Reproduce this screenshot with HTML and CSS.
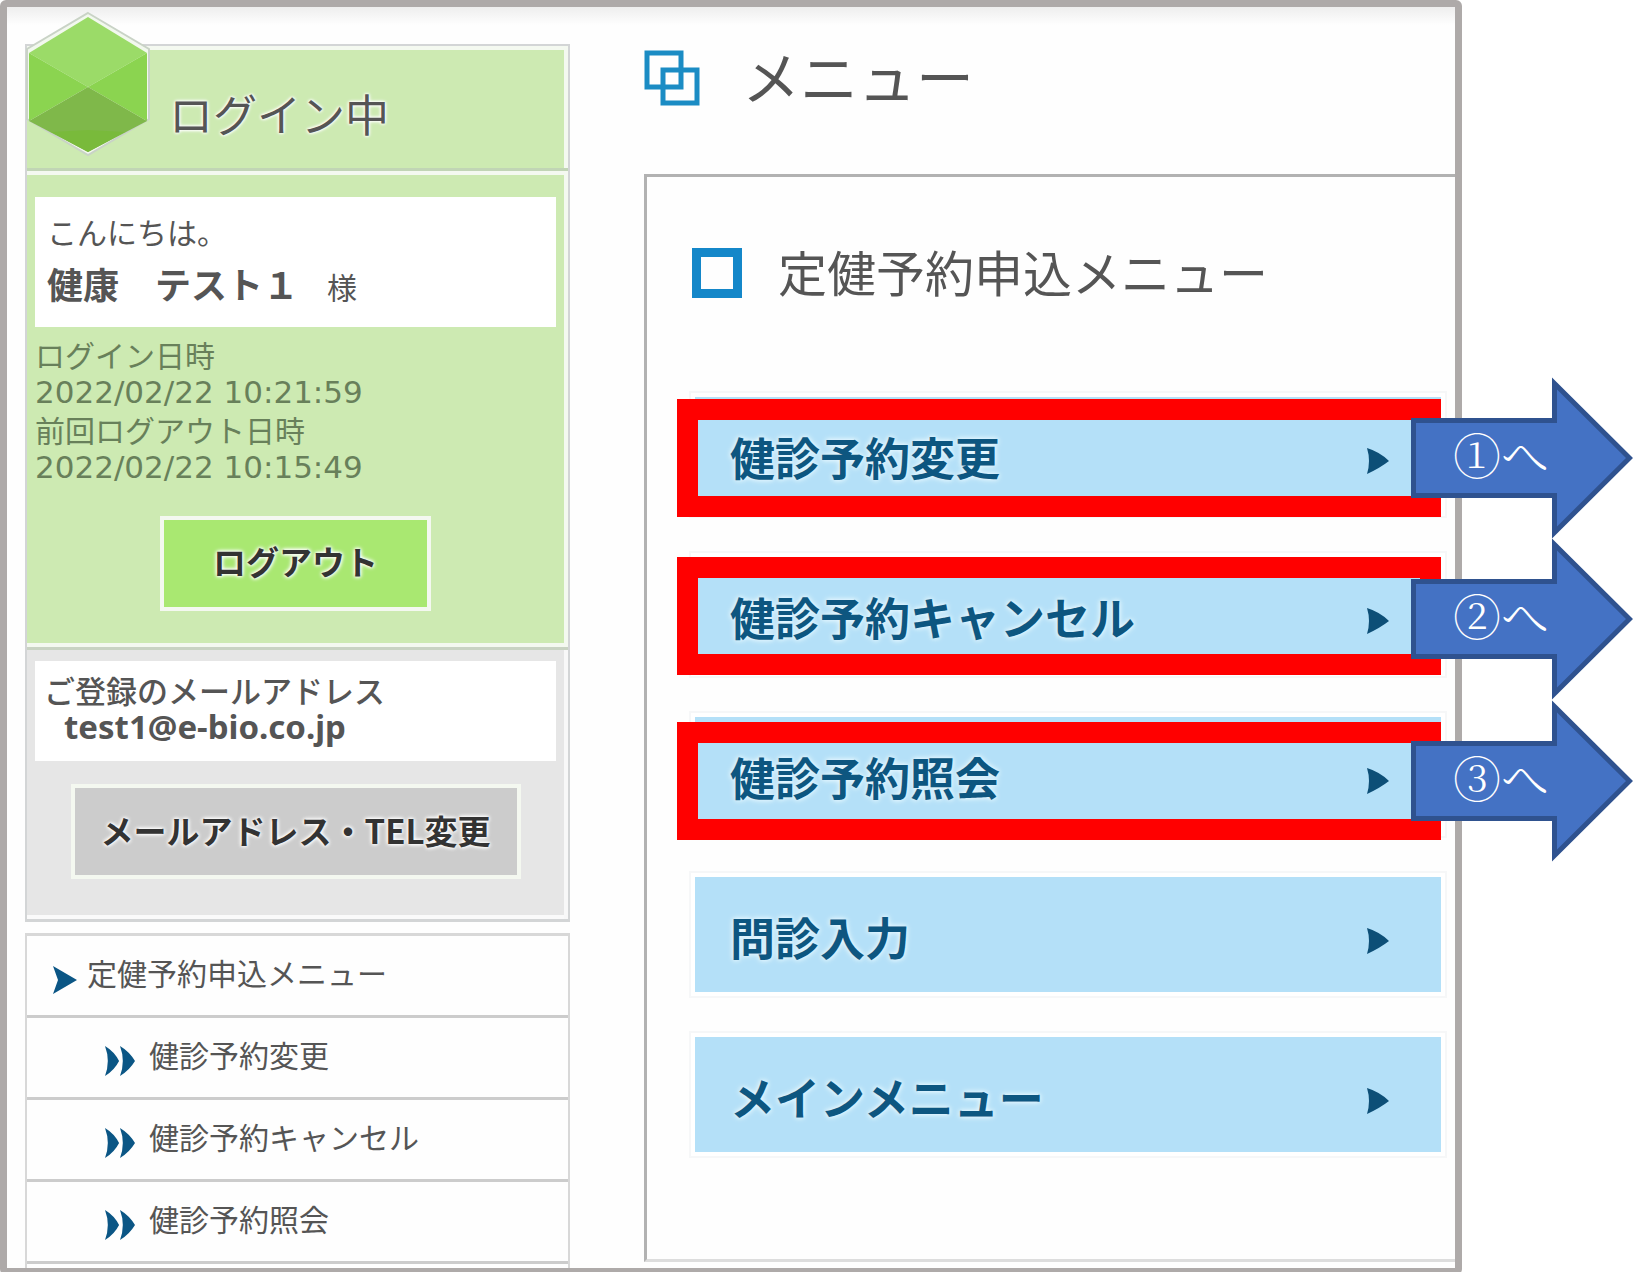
FILE: index.html
```html
<!DOCTYPE html>
<html lang="ja">
<head>
<meta charset="utf-8">
<meta name="viewport" content="width=device-width, initial-scale=1">
<title>メニュー</title>
<link rel="stylesheet" href="styles.css">
</head>
<body>
<svg width="0" height="0" class="defs" aria-hidden="true">
  <symbol id="chevron" viewBox="0 0 24 28"><path d="M0 0L24 14L0 28L5 14Z" fill="#0b5685"/></symbol>
  <symbol id="double" viewBox="0 0 32 32"><path d="M0 0Q10 6 15 16Q10 26 0 32Q6 16 0 0ZM16 0Q26 6 32 16Q26 26 16 32Q22 16 16 0Z" fill="#0b5685"/></symbol>
  <symbol id="play" viewBox="0 0 22 26"><path d="M0 0Q13 4 22 13Q13 20 0 26Q4 13 0 0Z" fill="#0d4f77"/></symbol>
  <symbol id="arrow" viewBox="0 0 222 162"><path d="M2.500 43.500H143.500V6.500L218.500 81L143.500 155.500V118.500H2.500Z" fill="#4472c4" stroke="#2f528f" stroke-width="5"/></symbol>
</svg>
<div class="page">
  <div class="frame">
    <aside class="sidebar">
      <section class="account">
        <header class="account-head">
          <svg class="hexagon" viewBox="0 0 126 146" aria-hidden="true">
            <path d="M63 2L124 38V108L63 144L2 108V38Z" fill="#f2f8ee" stroke="#c9d3c6" stroke-width="2"/>
            <path d="M63 6L122 42L63 76L4 42Z" fill="#9bdb68"/>
            <path d="M4 42L63 76L4 110ZM122 42L63 76L122 110Z" fill="#8bd450"/>
            <path d="M63 76L122 110L63 141L4 110Z" fill="#7fb84a"/>
            <path d="M63 119L100 121L63 141L26 121Z" fill="#79ba3b"/>
          </svg>
          <h2>ログイン中</h2>
        </header>
        <div class="account-body">
          <div class="box greeting">
            <p>こんにちは。</p>
            <p><strong>健康　テスト１</strong><span class="honorific">様</span></p>
          </div>
          <dl class="times">
            <dt>ログイン日時</dt><dd>2022/02/22 10:21:59</dd>
            <dt>前回ログアウト日時</dt><dd>2022/02/22 10:15:49</dd>
          </dl>
          <button type="button" class="btn btn-green">ログアウト</button>
        </div>
        <div class="contact">
          <div class="box mail">
            <p>ご登録のメールアドレス</p>
            <p class="address">test1@e-bio.co.jp</p>
          </div>
          <button type="button" class="btn btn-gray">メールアドレス・TEL変更</button>
        </div>
      </section>
      <nav class="side-nav">
        <a href="#"><svg class="i-chevron" aria-hidden="true"><use href="#chevron"/></svg>定健予約申込メニュー</a>
        <a href="#" class="sub"><svg class="i-double" aria-hidden="true"><use href="#double"/></svg>健診予約変更</a>
        <a href="#" class="sub"><svg class="i-double" aria-hidden="true"><use href="#double"/></svg>健診予約キャンセル</a>
        <a href="#" class="sub"><svg class="i-double" aria-hidden="true"><use href="#double"/></svg>健診予約照会</a>
      </nav>
    </aside>
    <main class="main">
      <h1>
        <svg class="i-title" viewBox="0 0 56 56" fill="none" stroke="#1b8cc4" stroke-width="5" aria-hidden="true"><rect x="3" y="3" width="34" height="34"/><rect x="19" y="20" width="34" height="33"/></svg>
        メニュー
      </h1>
      <section class="panel">
        <h2><span class="square"></span>定健予約申込メニュー</h2>
        <nav class="menu">
          <a href="#">健診予約変更<svg class="i-play" aria-hidden="true"><use href="#play"/></svg></a>
          <a href="#">健診予約キャンセル<svg class="i-play" aria-hidden="true"><use href="#play"/></svg></a>
          <a href="#">健診予約照会<svg class="i-play" aria-hidden="true"><use href="#play"/></svg></a>
          <a href="#">問診入力<svg class="i-play" aria-hidden="true"><use href="#play"/></svg></a>
          <a href="#">メインメニュー<svg class="i-play" aria-hidden="true"><use href="#play"/></svg></a>
        </nav>
      </section>
    </main>
  </div>
  <div class="mark mark-1"></div>
  <div class="mark mark-2"></div>
  <div class="mark mark-3"></div>
  <div class="callout callout-1"><svg aria-hidden="true"><use href="#arrow"/></svg><span>①へ</span></div>
  <div class="callout callout-2"><svg aria-hidden="true"><use href="#arrow"/></svg><span>②へ</span></div>
  <div class="callout callout-3"><svg aria-hidden="true"><use href="#arrow"/></svg><span>③へ</span></div>
</div>
</body>
</html>
```
FILE: styles.css
```css
* { box-sizing: border-box; }

body {
  margin: 0;
  background: #fff;
  color: #555;
  font-family: "Noto Sans CJK JP", sans-serif;
  font-size: 30px;
}

h1, h2, p, dl, dd { margin: 0; font-weight: 400; }
a { color: inherit; text-decoration: none; }
.defs { position: absolute; }

.page { position: relative; padding-right: 172px; }

.frame {
  display: flex;
  min-height: 100vh;
  border: 7px solid #aeaaa9;
  border-radius: 6px;
  background: linear-gradient(#eee, #fefefe 18px);
}

/* Sidebar */
.sidebar { flex: 0 0 563px; padding: 37px 0 0 18px; }

.account { border: 2px solid #d3d5d6; border-bottom-width: 3px; }

.account-head {
  position: relative;
  height: 125px;
  padding: 34px 0 0 142px;
  background: #cdeab2;
  border-bottom: 3px solid #c1d5b5;
  box-shadow: inset -4px 4px #f4f9f0;
}
.account-head h2 {
  font-size: 44px;
  line-height: 66px;
  color: #555;
  text-shadow: 0 0 3px #fff, 0 0 3px #fff, 0 0 4px #fff;
}
.hexagon { position: absolute; left: -2px; top: -35px; width: 126px; height: 146px; }

.account-body {
  padding: 26px 12px 36px 8px;
  background: #cdeab2;
  border-bottom: 3px solid #c9d3c3;
  box-shadow: inset -4px 4px #f4f9f0, inset 0 -4px #f4f9f0;
}

.box { background: #fff; }
.greeting { height: 130px; padding: 8px 12px; line-height: 52px; }
.greeting strong { font-size: 36px; }
.honorific { margin-left: 28px; }

.times { padding-top: 9px; line-height: 37px; color: #68805a; }
.times dd { font: 31px/38px "DejaVu Sans", sans-serif; }

.btn {
  display: block;
  margin: 0 auto;
  height: 95px;
  padding: 0 0 6px;
  border: 4px solid #f4f8f0;
  border-radius: 0;
  font: 700 33px/44px "Noto Sans CJK JP", sans-serif;
  color: #333;
  text-shadow: 0 0 3px #fff, 0 0 4px #fff, 0 0 5px #fff;
}
.btn-green { width: 271px; margin-top: 30px; background: #a9e871; }
.btn-gray { width: 450px; margin-top: 23px; padding-bottom: 4px; background: #ccc; }

.contact {
  padding: 11px 12px 40px 8px;
  background: #e6e6e6;
  box-shadow: inset -4px 0 #f8f8f8, inset 0 -4px #fafafa;
}
.mail { height: 100px; padding: 11px 9px; font-size: 31px; line-height: 36px; }
.mail p { font-weight: 500; }
.mail .address { padding-left: 20px; font: 700 33px/38px "Noto Sans", sans-serif; }

.side-nav { margin-top: 11px; padding-bottom: 4px; border: 2px solid #d8d8d8; border-top-width: 3px; border-bottom: 0; }
.side-nav a {
  display: flex;
  align-items: center;
  height: 82px;
  padding: 0 0 8px 26px;
  border-bottom: 3px solid #ccc;
}
.side-nav .sub { padding-left: 77px; }
.i-chevron { width: 24px; height: 28px; margin: 16px 10px 0 0; }
.i-double { width: 32px; height: 30px; margin: 14px 13px 0 0; }

/* Main column */
.main { flex: 1; min-width: 0; padding: 27px 0 2px 74px; }

.main h1 {
  display: flex;
  align-items: center;
  gap: 42px;
  height: 88px;
  padding-bottom: 6px;
  font-size: 58px;
  line-height: 80px;
}
.i-title { width: 56px; height: 56px; margin-top: 5px; }

.panel {
  margin-top: 52px;
  padding: 58px 14px 107px 48px;
  border: 3px solid #b2b2b2;
  border-width: 3px 0 3px 3px;
  border-bottom-color: #ddd;
}
.panel h2 {
  display: flex;
  align-items: center;
  gap: 36px;
  height: 76px;
  margin-left: -3px;
  font-size: 49px;
  line-height: 72px;
  padding-bottom: 4px;
}
.square { width: 50px; height: 50px; margin-top: 4px; border: 9px solid #1487c9; }

.menu { display: grid; gap: 45px; margin-top: 86px; }
.menu a {
  display: flex;
  align-items: center;
  justify-content: space-between;
  height: 115px;
  padding: 4px 52px 0 35px;
  background: #b4e0f8;
  box-shadow: 0 0 0 4px #fff, 0 0 0 6px #f6f7f8;
  color: #0d5680;
  font-size: 45px;
  font-weight: 700;
  text-shadow: 0 0 4px #e8f8ff, 0 0 6px #e8f8ff;
}
.i-play { width: 22px; height: 26px; margin-top: 9px; }

/* Annotations laid over the screen */
.mark {
  position: absolute;
  left: 677px;
  right: 193px;
  height: 118px;
  border: 21px solid #f00;
}
.mark-1 { top: 399px; }
.mark-2 { top: 557px; }
.mark-3 { top: 722px; }

.callout {
  position: absolute;
  right: 1px;
  width: 222px;
  height: 162px;
  color: #fff;
  font-family: "Noto Serif CJK JP", "Noto Sans CJK JP", sans-serif;
  font-size: 48px;
  font-weight: 300;
  line-height: 154px;
}
.callout svg { position: absolute; width: 100%; height: 100%; }
.callout span { position: relative; margin-left: 42px; }
.callout-1 { top: 377px; }
.callout-2 { top: 538px; }
.callout-3 { top: 700px; }
```
